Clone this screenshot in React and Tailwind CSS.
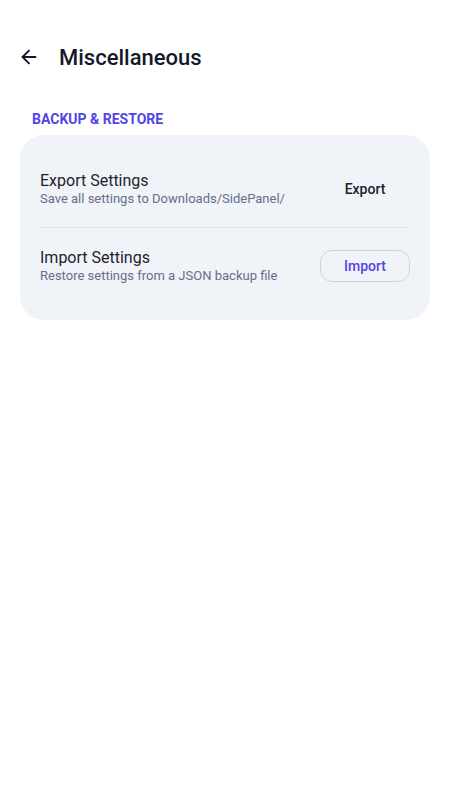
import { ArrowLeft } from 'lucide-react';

function SettingRow({ title, subtitle, action, outlined }) {
    return (
        <div className="flex items-center justify-between py-5">
            <div className="flex flex-col">
                <span className="text-base leading-5 text-[#1e2230]">{title}</span>
                <span className="text-[13px] leading-4 text-[#64708a]">{subtitle}</span>
            </div>
            <button
                className={
                    outlined
                        ? 'w-[90px] h-8 rounded-xl border border-[#cdd5e3] text-sm font-medium text-[#5046e5]'
                        : 'w-[90px] h-8 rounded-xl text-sm font-medium text-[#1e2230]'
                }
            >
                {action}
            </button>
        </div>
    );
}

export default function App() {
    return (
        <div className="min-h-screen bg-white font-['Roboto',sans-serif]">
            <div className="flex items-center h-12 pt-[33px] box-content px-5">
                <ArrowLeft size={22} strokeWidth={2.1} className="text-[#141a2b] -ml-[2px]" />
                <h1 className="ml-[19px] text-[22px] font-medium text-[#141a2b]">Miscellaneous</h1>
            </div>
            <div className="px-8 mt-7 text-sm font-bold text-[#5046e5] leading-5">BACKUP &amp; RESTORE</div>
            <div className="mx-5 mt-[6px] rounded-3xl bg-[#f0f3f8] px-5 py-4">
                <SettingRow title="Export Settings" subtitle="Save all settings to Downloads/SidePanel/" action="Export" />
                <div className="h-px bg-[#dde3ec]" />
                <SettingRow title="Import Settings" subtitle="Restore settings from a JSON backup file" action="Import" outlined />
            </div>
        </div>
    );
}
